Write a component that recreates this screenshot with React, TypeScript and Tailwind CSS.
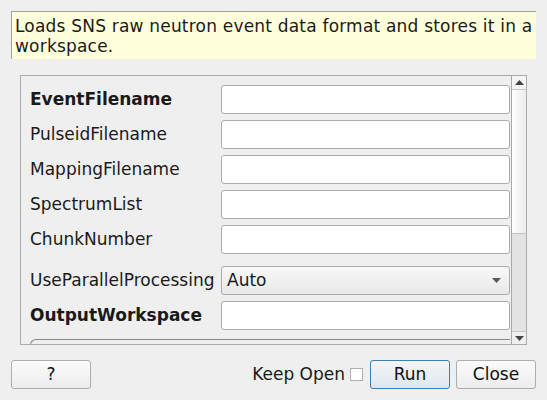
import React from 'react';

const font = { fontFamily: '"DejaVu Sans", sans-serif' };

type Row = { label: string; bold?: boolean; combo?: string };

const rows: Row[] = [
  { label: 'EventFilename', bold: true },
  { label: 'PulseidFilename' },
  { label: 'MappingFilename' },
  { label: 'SpectrumList' },
  { label: 'ChunkNumber' },
  { label: 'UseParallelProcessing', combo: 'Auto' },
  { label: 'OutputWorkspace', bold: true },
];

function Field({ row }: { row: Row }) {
  if (row.combo) {
    return (
      <div className="flex h-[29px] items-center justify-between rounded-[3px] border border-[#acacac] bg-gradient-to-b from-[#f8f8f8] to-[#e9e9e9] pl-[5px] pr-[8px]">
        <span>{row.combo}</span>
        <svg width="9" height="5" viewBox="0 0 9 5">
          <path d="M0 0h9L4.5 5z" fill="#5a5a5a" />
        </svg>
      </div>
    );
  }
  return <div className="h-[29px] rounded-[3px] border border-[#acacac] bg-white" />;
}

function Scrollbar() {
  return (
    <div className="flex w-[15px] flex-col border-l border-[#a9a9a9] bg-[#e3e3e3]">
      <div className="flex h-[14px] items-center justify-center border-b border-[#c8c8c8] bg-[#f4f4f4]">
        <svg width="9" height="5" viewBox="0 0 9 5">
          <path d="M4.5 0L9 5H0z" fill="#444" />
        </svg>
      </div>
      <div className="h-[144px] border-b border-[#c4c4c4] bg-gradient-to-r from-white to-[#ececec]" />
      <div className="flex-1" />
      <div className="flex h-[13px] items-center justify-center border-t border-[#c8c8c8] bg-[#efefef]">
        <svg width="9" height="5" viewBox="0 0 9 5">
          <path d="M0 0h9L4.5 5z" fill="#444" />
        </svg>
      </div>
    </div>
  );
}

function Button({ children, primary }: { children: React.ReactNode; primary?: boolean }) {
  return (
    <button
      className={
        primary
          ? 'h-[29px] w-[80px] rounded-[3px] border border-[#3d7eb4] bg-gradient-to-b from-[#f3f6f9] to-[#dfe6ec] text-[17px] text-[#111]'
          : 'h-[29px] w-[80px] rounded-[3px] border border-[#adadad] bg-gradient-to-b from-[#fbfbfb] to-[#ededed] text-[17px] text-[#111]'
      }
    >
      {children}
    </button>
  );
}

export default function App() {
  return (
    <div
      className="flex h-[400px] w-[547px] flex-col bg-[#efefef] px-[11px] pt-[11px] text-[17px] text-[#1a1a1a]"
      style={font}
    >
      <div className="h-[48px] border-l border-t border-[#a0a0a0] bg-[#ffffdc] pl-[3px] pt-[4px] leading-[20px] tracking-[0.2px]">
        Loads SNS raw neutron event data format and stores it in a workspace.
      </div>

      <div className="mx-[9px] mt-[16px] flex h-[270px] border border-[#ababab]">
        <div className="flex-1 overflow-hidden pl-[9px] pr-px pt-[9px]">
          <div className="grid grid-cols-[191px_1fr] gap-y-[6px]">
            {rows.map((row) => (
              <React.Fragment key={row.label}>
                <div
                  className={
                    (row.bold ? 'font-bold ' : '') +
                    (row.combo ? 'mt-[6px] ' : '') +
                    'flex h-[29px] items-center whitespace-nowrap'
                  }
                >
                  {row.label}
                </div>
                <div className={row.combo ? 'mt-[6px]' : ''}>
                  <Field row={row} />
                </div>
              </React.Fragment>
            ))}
          </div>
          <div className="mt-[9px] h-[40px] rounded-tl-[6px] border-l border-t border-[#8a8a8a]" />
        </div>
        <Scrollbar />
      </div>

      <div className="mt-[15px] flex items-center">
        <Button>?</Button>
        <div className="ml-auto mr-[7px] flex items-center gap-[5px]">
          <span>Keep Open</span>
          <span className="h-[13px] w-[13px] border border-[#b0b0b0] bg-white" />
        </div>
        <Button primary>Run</Button>
        <div className="w-[6px]" />
        <Button>Close</Button>
      </div>
    </div>
  );
}
